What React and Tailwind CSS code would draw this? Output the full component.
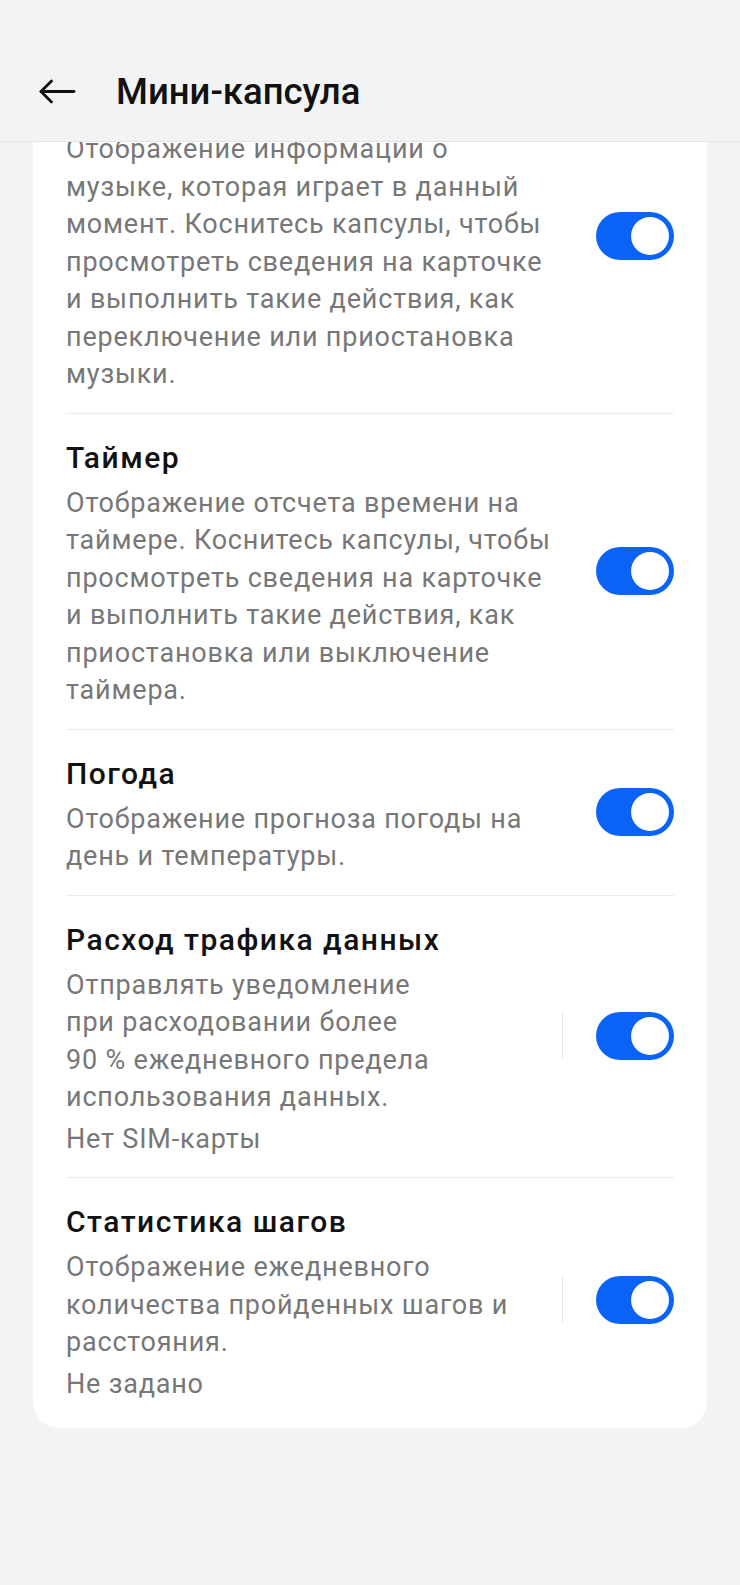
import React from "react";

const rows = [
  {
    // title of this row is scrolled away under the top bar
    title: null,
    lines: [
      "Отображение информации о",
      "музыке, которая играет в данный",
      "момент. Коснитесь капсулы, чтобы",
      "просмотреть сведения на карточке",
      "и выполнить такие действия, как",
      "переключение или приостановка",
      "музыки.",
    ],
  },
  {
    title: "Таймер",
    lines: [
      "Отображение отсчета времени на",
      "таймере. Коснитесь капсулы, чтобы",
      "просмотреть сведения на карточке",
      "и выполнить такие действия, как",
      "приостановка или выключение",
      "таймера.",
    ],
  },
  {
    title: "Погода",
    lines: ["Отображение прогноза погоды на", "день и температуры."],
  },
  {
    title: "Расход трафика данных",
    lines: [
      "Отправлять уведомление",
      "при расходовании более",
      "90 % ежедневного предела",
      "использования данных.",
    ],
    note: "Нет SIM-карты",
    divider: true,
  },
  {
    title: "Статистика шагов",
    lines: [
      "Отображение ежедневного",
      "количества пройденных шагов и",
      "расстояния.",
    ],
    note: "Не задано",
    divider: true,
  },
];

function Toggle() {
  return (
    <div className="w-[78px] h-[48px] rounded-full bg-[#0a63f6] p-[5px] flex justify-end">
      <div className="w-[38px] h-[38px] rounded-full bg-white" />
    </div>
  );
}

function Row({ row, last }) {
  return (
    <div className={`flex items-center pt-[26px] ${last ? "pb-[25px]" : "pb-[19px]"}`}>
      <div className="flex-1">
        {row.title ? (
          <div className="text-[30px] leading-[36px] font-medium tracking-[1.5px] text-[#111]">{row.title}</div>
        ) : (
          <div className="h-[36px]" />
        )}
        <div className="mt-[9px] text-[27px] leading-[37.5px] tracking-[0.8px] text-[#777]">
          {row.lines.map((l, i) => (
            <div key={i}>{l}</div>
          ))}
        </div>
        {row.note && (
          <div className="mt-[4px] text-[27px] leading-[37.5px] tracking-[0.8px] text-[#777]">{row.note}</div>
        )}
      </div>
      <div className="flex items-center mb-2">
        {row.divider && <div className="w-[1.5px] h-[45px] bg-[#e2e2e2] mr-[33px]" />}
        <Toggle />
      </div>
    </div>
  );
}

export default function App() {
  return (
    <div
      className="w-[740px] h-[1585px] bg-[#f2f3f5] flex flex-col overflow-hidden"
      style={{ fontFamily: "Roboto, 'Noto Sans', sans-serif" }}
    >
      {/* Top bar */}
      <div className="h-[142px] shrink-0 border-b border-[#e4e5e7] bg-[#f2f3f5] flex items-center pt-[42px] pl-[39px] relative z-10">
        <svg width="37" height="25" viewBox="0 0 37 25" fill="none" stroke="#111" strokeWidth="2.8" strokeLinecap="round" strokeLinejoin="round">
          <path d="M2 12.5H35" />
          <path d="M12.5 2L2 12.5L12.5 23" />
        </svg>
        <h1 className="ml-[40px] text-[36.5px] font-medium text-[#111] leading-[44px]">Мини-капсула</h1>
      </div>

      {/* Scrolled content */}
      <div className="flex-1 overflow-hidden">
        <div className="mx-[33px] -mt-[82px] bg-white rounded-[26px] px-[33px]">
          {rows.map((row, i) => (
            <div key={i} className={i > 0 ? "border-t border-[#ebebeb]" : ""}>
              <Row row={row} last={i === rows.length - 1} />
            </div>
          ))}
        </div>
      </div>
    </div>
  );
}
